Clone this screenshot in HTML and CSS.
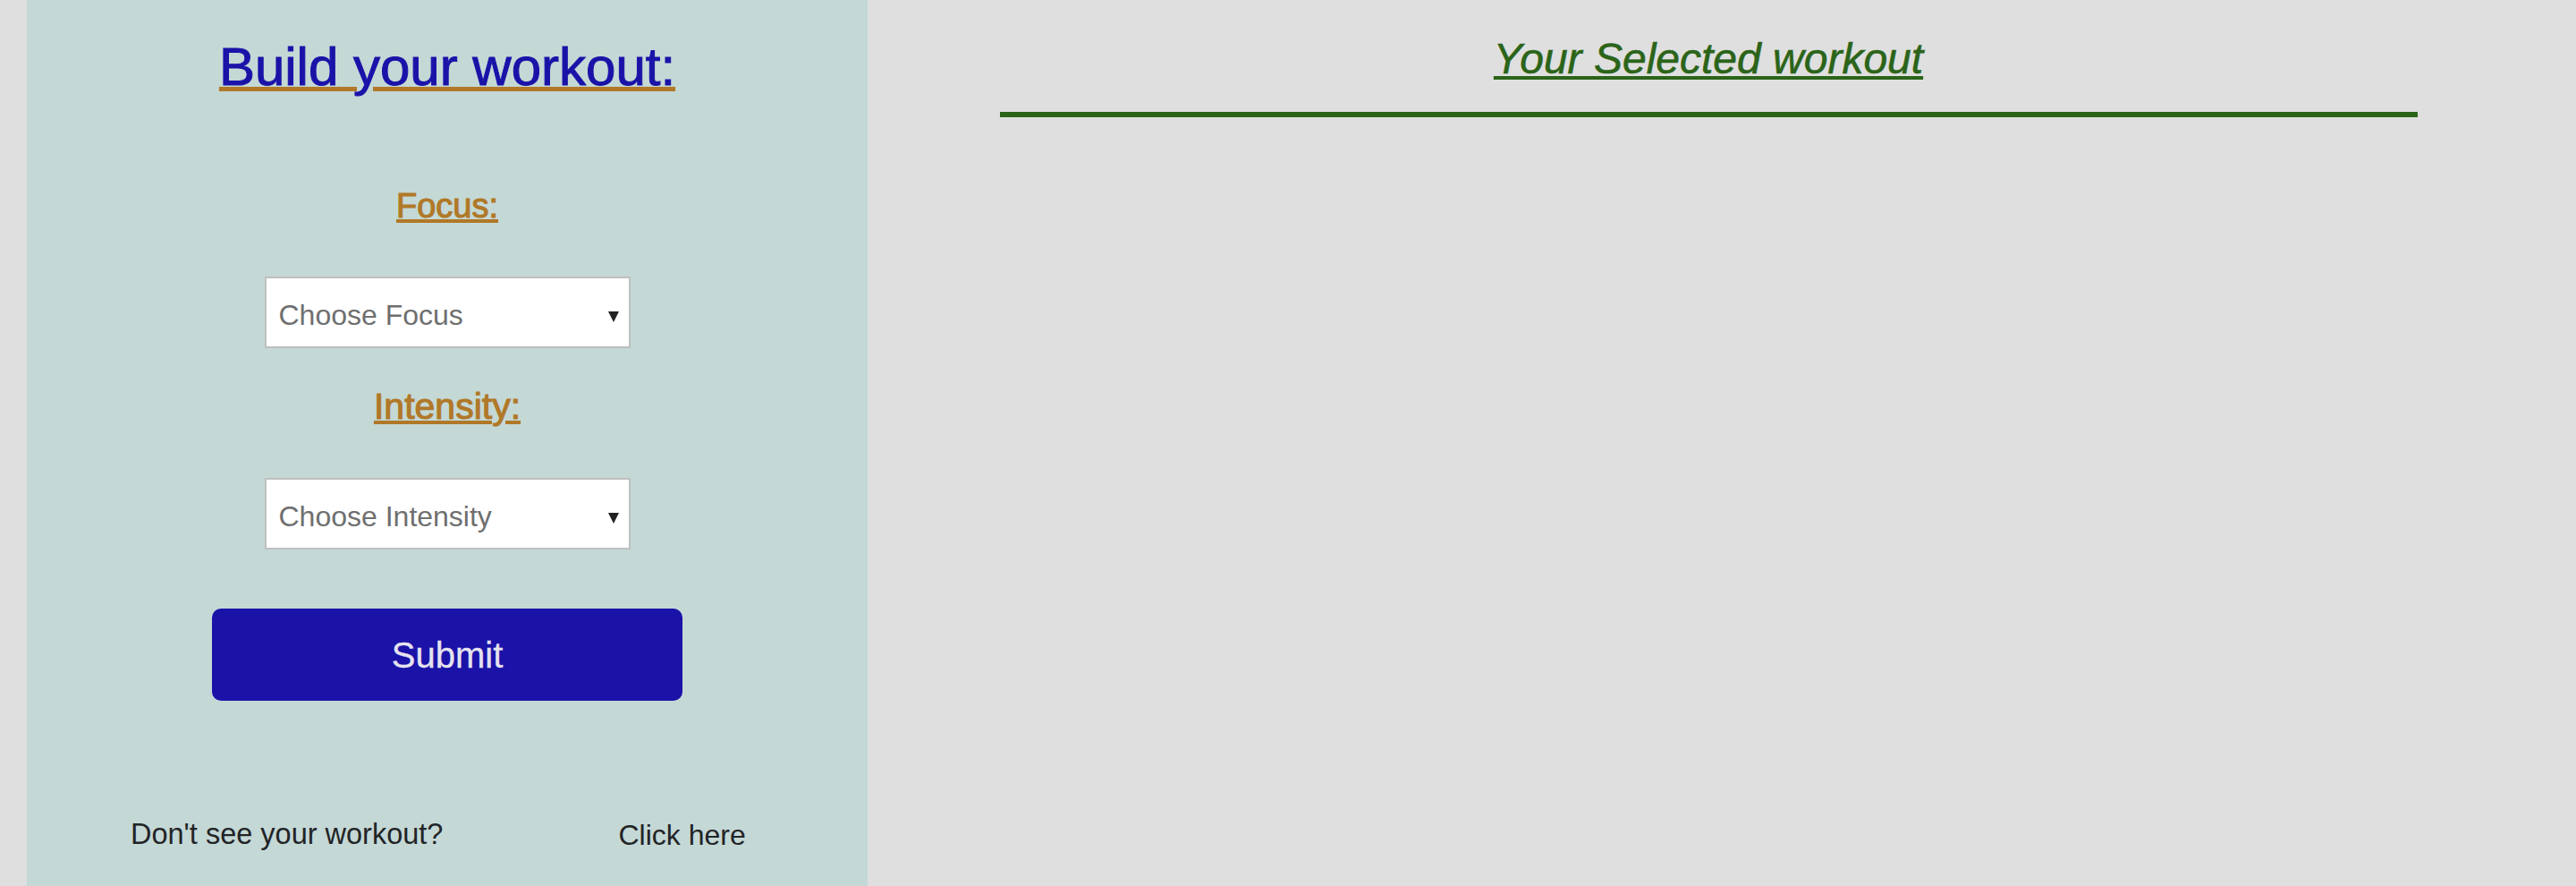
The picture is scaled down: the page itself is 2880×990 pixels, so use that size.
FILE: index.html
```html
<!DOCTYPE html>
<html lang="en">
<head>
<meta charset="utf-8">
<title>Workout builder</title>
<link rel="stylesheet" href="styles.css">
</head>
<body>
<div class="page">
  <section class="builder">
    <h1 class="builder-title">Build your workout:</h1>
    <h2 class="field-label label-focus">Focus:</h2>
    <div class="select-wrap">
      <select class="picker">
        <option>Choose Focus</option>
      </select>
    </div>
    <h2 class="field-label label-intensity">Intensity:</h2>
    <div class="select-wrap select-intensity">
      <select class="picker">
        <option>Choose Intensity</option>
      </select>
    </div>
    <button class="submit-btn" type="button">Submit</button>
    <div class="missing-row">
      <p class="missing-text">Don't see your workout?</p>
      <span class="missing-link">Click here</span>
    </div>
  </section>
  <section class="selected">
    <h2 class="selected-title">Your Selected workout</h2>
    <hr class="selected-rule">
  </section>
</div>
</body>
</html>
```
FILE: styles.css
```css
html, body {
  margin: 0;
  padding: 0;
  height: 100%;
}
body {
  background: #dfdfdf;
  font-family: "Liberation Sans", Arial, sans-serif;
  overflow: hidden;
}
.page {
  display: flex;
  padding: 0 30px;
  min-height: 990px;
}
.builder {
  width: 940px;
  flex: none;
  background: #c4d8d6;
  display: flex;
  flex-direction: column;
  align-items: center;
  padding-top: 45px;
  box-sizing: border-box;
  min-height: 990px;
}
.builder-title {
  margin: 0;
  font-size: 60px;
  line-height: 1;
  font-weight: 400;
  color: #1b12a8;
  text-decoration: underline;
  text-decoration-color: #b07828;
  text-decoration-thickness: 5px;
  text-underline-offset: 2px;
  -webkit-text-stroke: 1px #1b12a8;
}
.field-label {
  margin: 0;
  line-height: 1;
  font-weight: 400;
  color: #b07828;
  text-decoration: underline;
  text-decoration-thickness: 4px;
  text-underline-offset: 2px;
  -webkit-text-stroke: 1.1px #b07828;
}
.label-focus {
  font-size: 38px;
  margin-top: 106px;
}
.label-intensity {
  font-size: 41px;
  margin-top: 45px;
}
.select-wrap {
  position: relative;
  margin-top: 60px;
  width: 409px;
  height: 80px;
}
.select-intensity {
  margin-top: 59px;
}
.select-wrap::after {
  content: "";
  position: absolute;
  right: 13px;
  top: 39px;
  width: 0;
  height: 0;
  border-left: 6px solid transparent;
  border-right: 6px solid transparent;
  border-top: 12px solid #222;
  pointer-events: none;
}
.picker {
  -webkit-appearance: none;
  appearance: none;
  box-sizing: border-box;
  display: block;
  width: 409px;
  height: 80px;
  margin: 0;
  padding: 6px 30px 0 14px;
  border: 2px solid #bfbfbf;
  border-radius: 0;
  background: #ffffff;
  font-family: "Liberation Sans", Arial, sans-serif;
  font-size: 32px;
  color: #6f6f6f;
  outline: none;
}
.submit-btn {
  margin-top: 66px;
  width: 526px;
  height: 103px;
  border: none;
  border-radius: 10px;
  background: #1b12a8;
  color: #e6e3ef;
  font-family: "Liberation Sans", Arial, sans-serif;
  font-size: 40px;
  line-height: 1;
  padding: 0;
  -webkit-text-stroke: 0.3px #e6e3ef;
}
.missing-row {
  align-self: stretch;
  display: flex;
  align-items: flex-start;
  gap: 196px;
  padding-left: 116px;
  margin-top: 133px;
  color: #222426;
  font-size: 32px;
  line-height: 1;
}
.missing-text {
  margin: 0;
  font-size: 32.5px;
}
.missing-link {
  padding-top: 1px;
}
.selected {
  flex: 1;
  display: flex;
  flex-direction: column;
  align-items: center;
  padding-top: 42px;
}
.selected-title {
  margin: 0;
  font-size: 48px;
  line-height: 1;
  font-weight: 400;
  font-style: italic;
  color: #2b6419;
  text-decoration: underline;
  text-decoration-thickness: 4px;
  text-underline-offset: 3px;
  -webkit-text-stroke: 0.6px #2b6419;
}
.selected-rule {
  align-self: stretch;
  margin: 35px 147px 0 148px;
  height: 6px;
  border: none;
  background: #2b6419;
}
```
